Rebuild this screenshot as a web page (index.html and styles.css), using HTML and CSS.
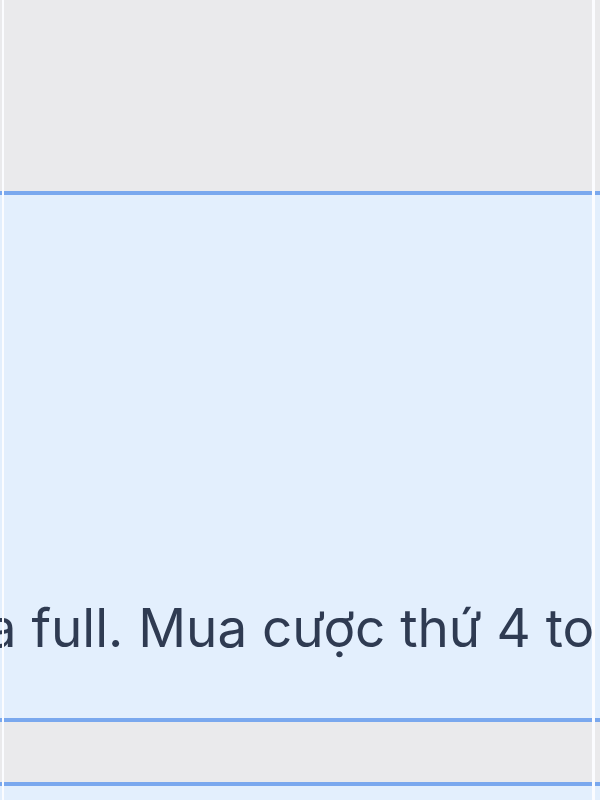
FILE: index.html
```html
<!DOCTYPE html>
<html lang="vi">
<head>
<meta charset="utf-8">
<link rel="stylesheet" href="styles.css">
</head>
<body>
<div class="frame">
  <div class="top-gap"></div>
  <div class="panel">
    <div class="msg-clip">
      <p class="msg">khóa full. Mua cược thứ 4 toàn bộ</p>
    </div>
  </div>
  <div class="mid-gap"></div>
  <div class="panel next"></div>
</div>
</body>
</html>
```

FILE: styles.css
```css
html, body {
  margin: 0;
  padding: 0;
  overflow: hidden;
}
body {
  background: #eaeaec;
  font-family: Inter, "Noto Sans", sans-serif;
}
.frame {
  position: relative;
  width: 600px;
  height: 800px;
  display: flex;
  flex-direction: column;
  overflow: hidden;
}
.frame::before,
.frame::after {
  content: "";
  position: absolute;
  top: 0;
  bottom: 0;
  width: 2px;
  background: #fbfcff;
}
.frame::before { left: 2px; }
.frame::after { left: 592px; width: 3px; }
.top-gap {
  height: 191px;
  flex: none;
}
.panel {
  flex: none;
  height: 523px;
  background: #e3effd;
  border-top: 4px solid #7aa8ee;
  border-bottom: 4px solid #7aa8ee;
  display: flex;
  flex-direction: column;
  justify-content: flex-end;
  overflow: hidden;
}
.msg-clip {
  width: 592px;
  overflow: hidden;
  margin-bottom: 56px;
}
.msg {
  margin: 0;
  white-space: nowrap;
  font-size: 53px;
  line-height: 67px;
  color: #2f3b52;
  text-indent: -106px;
}
.mid-gap {
  height: 60px;
  flex: none;
}
.panel.next {
  height: 100px;
}
```
